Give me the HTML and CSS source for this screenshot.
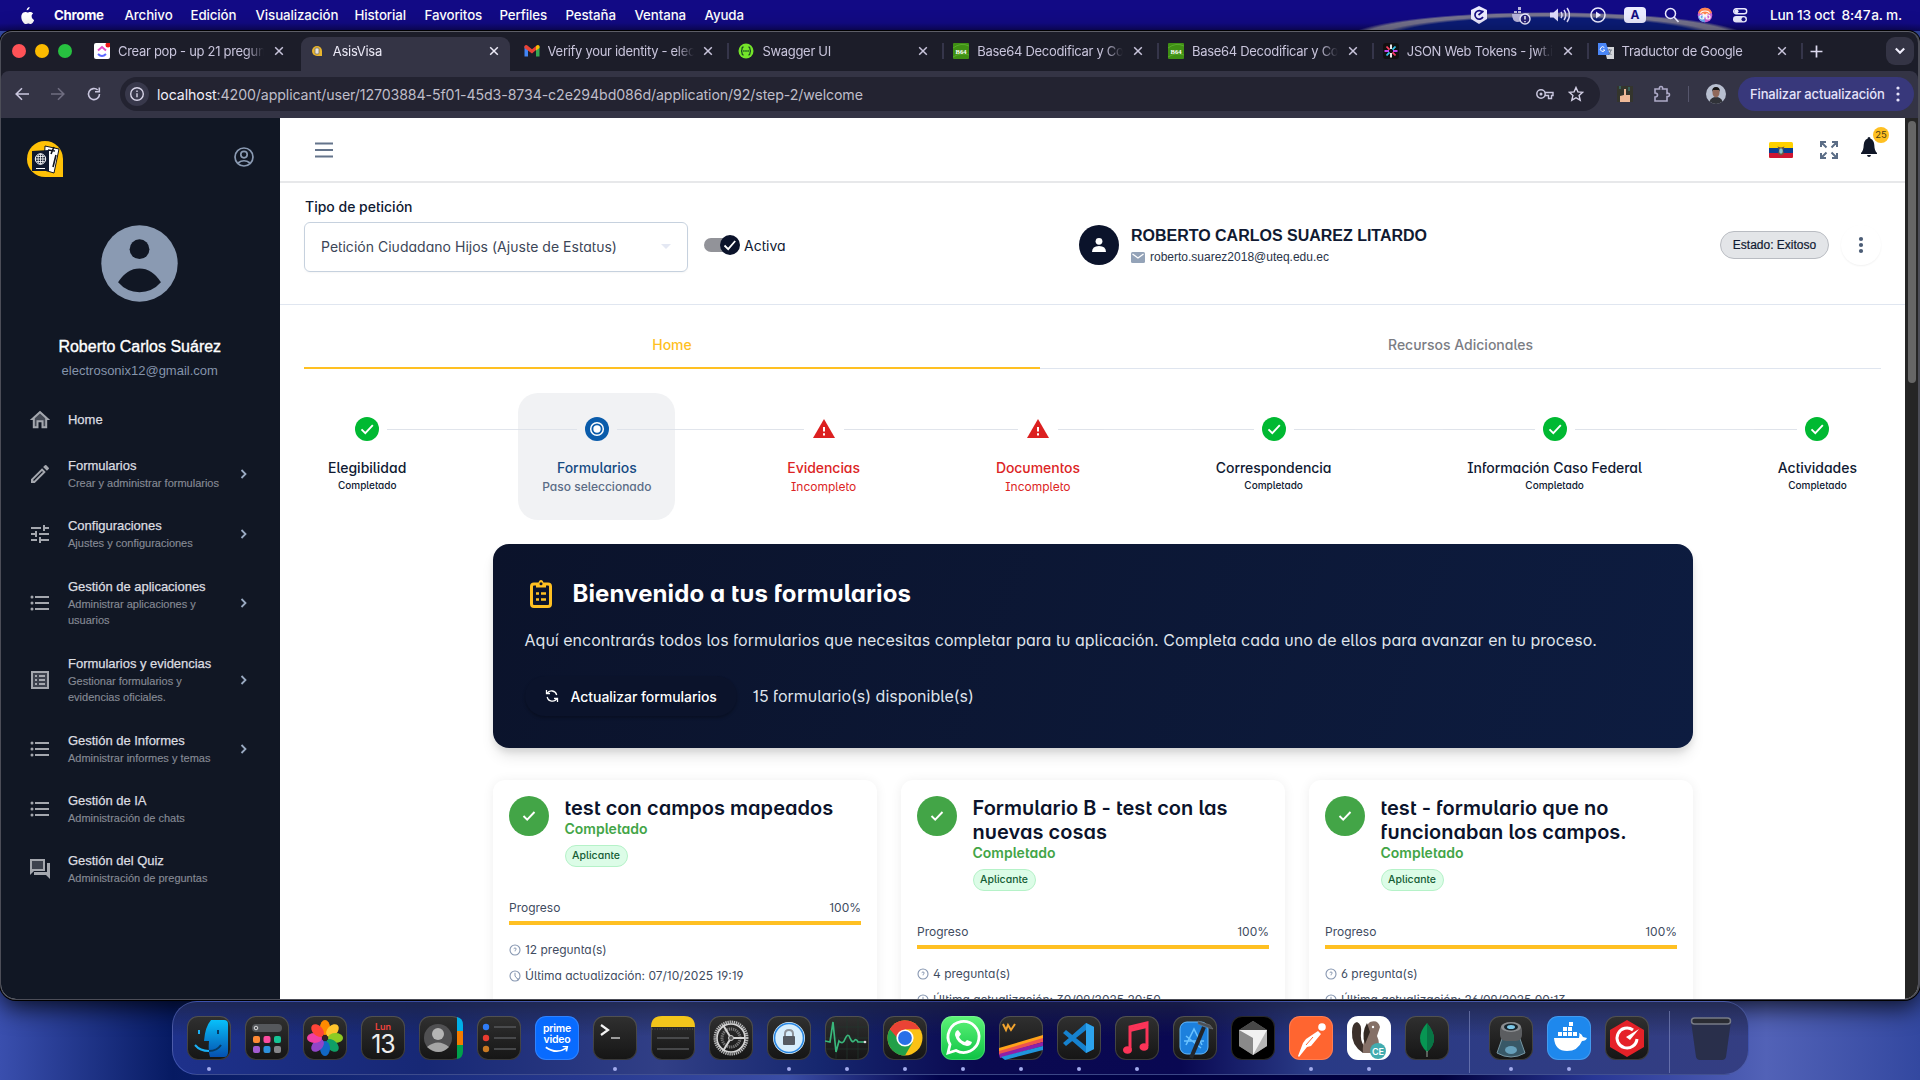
FILE: index.html
```html
<!DOCTYPE html>
<html lang="es">
<head>
<meta charset="utf-8">
<title>AsisVisa</title>
<link rel="stylesheet" href="styles.css">
</head>
<body>
<svg class="sprite" aria-hidden="true">
  <symbol id="close" viewBox="0 0 10 10"><path d="M1.2 1.2l7.6 7.6M8.8 1.2L1.2 8.8" stroke="currentColor" stroke-width="1.5" fill="none"/></symbol>
  <symbol id="list" viewBox="0 0 24 24"><circle cx="4" cy="6" r="1.5"/><circle cx="4" cy="12" r="1.5"/><circle cx="4" cy="18" r="1.5"/><path d="M7 5h14v2H7zM7 11h14v2H7zM7 17h14v2H7z"/></symbol>
  <symbol id="chevron" viewBox="0 0 16 16"><path d="M5.5 4l4 4-4 4" fill="none" stroke="currentColor" stroke-width="1.8"/></symbol>
  <symbol id="done" viewBox="0 0 24 24"><circle cx="12" cy="12" r="12" fill="#00b932"/><path d="M6.5 12.4l3.8 3.8 7.5-8" fill="none" stroke="#fff" stroke-width="1.9"/></symbol>
  <symbol id="warn" viewBox="0 0 24 24"><path d="M12 2L1 21h22z" fill="#dc2020"/><path d="M11 10h2v4.5h-2zM11 16.3h2v2.2h-2z" fill="#fff"/></symbol>
  <symbol id="leaf" viewBox="0 0 16 16"><rect width="16" height="16" rx="1" fill="#3f8f14"/><path d="M0 5q8-6 16-2M0 14q8-5 16-2" stroke="#58ab2c" fill="none"/></symbol>
  <symbol id="help" viewBox="0 0 12 12"><circle cx="6" cy="6" r="5" fill="none" stroke="#8696b0" stroke-width="1.1"/><path d="M4.7 4.7q1.3-1.5 2.4-.2.5 1.1-1.1 2v.8" fill="none" stroke="#8696b0"/></symbol>
  <symbol id="clock" viewBox="0 0 12 12"><circle cx="6" cy="6" r="5" fill="none" stroke="#8696b0" stroke-width="1.1"/><path d="M6 2.8V6l2.8 3.4M9 8v2.5" fill="none" stroke="#8696b0"/></symbol>
</svg>

<div class="desktop">
  <header class="menubar">
    <svg class="apple" viewBox="0 0 14 17"><path d="M9.600 0c.2 1.600-1.400 3.300-2.900 3.200C6.500 1.700 8 .2 9.600 0zM11.600 9c0-1.700 1.400-2.500 1.500-2.600-.9-1.300-2.200-1.500-2.600-1.500-1.200-.1-2.200.7-2.800.7-.6 0-1.500-.7-2.400-.6C4 5 2.700 5.700 2 6.900c-1.500 2.500-.4 6.200 1 8.200.7 1 1.500 2 2.600 2 1 0 1.400-.7 2.600-.7s1.600.7 2.600.6c1.100 0 1.800-1 2.400-1.900.6-.9 1-2 1-2.100-.1 0-2.600-1-2.600-4z" fill="#fff"/></svg>
    <nav class="menus"><b>Chrome</b><span>Archivo</span><span>Edición</span><span>Visualización</span><span>Historial</span><span>Favoritos</span><span>Perfiles</span><span>Pestaña</span><span>Ventana</span><span>Ayuda</span></nav>
    <div class="status">
      <svg viewBox="0 0 20 20"><path d="M10 1l8 4v9l-8 5-8-5V5z" fill="#ecebff"/><path d="M13.500 7A4.300 4.300 0 1 0 14 12M9.500 10l5-4" stroke="#160d83" stroke-width="1.700" fill="none"/></svg>
      <svg viewBox="0 0 20 20"><path d="M1 9h12l5-1q-1 3-3 3-3 6-9 6-5-1-5-8zM3 6h3v2H3zM7 6h3v2H7zM7 2h3v3H7z" fill="#b9b5dc"/><circle cx="14" cy="14" r="5" fill="#272077" stroke="#ecebff" stroke-width="1.400"/><path d="M14 11v3.500M14 16v1.200" stroke="#fff" stroke-width="1.400"/></svg>
      <svg viewBox="0 0 20 20"><path d="M0 7.500h3.500L8 3.500v13l-4.500-4H0z" fill="#dddafa"/><path d="M11 7q2 3 0 6M14 5q3.500 5 0 10M17 3q5 7 0 14" stroke="#dddafa" stroke-width="1.500" fill="none"/></svg>
      <svg viewBox="0 0 20 20"><circle cx="10" cy="10" r="7" fill="none" stroke="#ecebff" stroke-width="1.500"/><path d="M8 6.500l5 3.500-5 3.500z" fill="#ecebff"/></svg>
      <span class="input-source">A</span>
      <svg viewBox="0 0 20 20"><circle cx="8.500" cy="8.500" r="5" fill="none" stroke="#ecebff" stroke-width="1.500"/><path d="M12 12l4.500 5" stroke="#ecebff" stroke-width="1.700"/></svg>
      <svg viewBox="0 0 20 20"><circle cx="10" cy="10" r="7.300" fill="#cf64d8"/><path d="M3 8a7.300 7.300 0 0 1 14 0l-7 2z" fill="#ff8550"/><path d="M3 11q1 6 7 6.300L9 10z" fill="#63aef5"/><path d="M7.500 8.500l5 4M12.500 8.500l-5 4" stroke="#fff" stroke-width="1.300"/><circle cx="7" cy="12" r="2" fill="none" stroke="#fff" stroke-width="1.200"/><circle cx="13" cy="12" r="2" fill="none" stroke="#fff" stroke-width="1.200"/><path d="M5.500 8.500Q6 6 10 6t4.500 2.500" fill="none" stroke="#fff" stroke-width="1.200"/></svg>
      <svg viewBox="0 0 20 20"><rect x="3.700" y="3.700" width="13" height="5" rx="2.500" fill="none" stroke="#ecebff" stroke-width="1.400"/><rect x="3" y="11" width="14" height="6.500" rx="3.200" fill="#ecebff"/><circle cx="6.500" cy="6.200" r="2" fill="#ecebff"/><circle cx="13.500" cy="14.200" r="2" fill="#160d83"/></svg>
    </div>
    <span class="clock-text">Lun 13 oct&nbsp; 8:47&#8202;a. m.</span>
  </header>

  <section class="window">
    <div class="tabstrip">
      <div class="lights"><i class="red"></i><i class="amber"></i><i class="green"></i></div>
      <div class="tab"><svg class="fav" viewBox="0 0 16 16"><rect width="16" height="16" rx="2" fill="#fff"/><path d="M4 7.500L8 4l4 3.500" fill="none" stroke="#e54bc8" stroke-width="2"/><path d="M4 11q4 4 8 0" fill="none" stroke="#5c68ff" stroke-width="2"/><circle cx="14" cy="2" r="2.500" fill="#f21717"/></svg><span>Crear pop - up 21 preguntas</span><svg class="x"><use href="#close"/></svg></div>
      <div class="tab active"><svg class="fav" viewBox="0 0 16 16"><path d="M8 3a5 5 0 1 0 0 10h5V8a5 5 0 0 0-5-5z" fill="#e9b52d"/><rect x="6" y="5" width="4" height="6" rx="1" fill="#e8e4da" stroke="#6a6660" stroke-width=".7"/></svg><span>AsisVisa</span><svg class="x"><use href="#close"/></svg></div>
      <div class="tab"><svg class="fav" viewBox="0 0 16 16"><path d="M.5 3v10.500H4V7z" fill="#4285f4"/><path d="M15.500 3v10.500H12V7z" fill="#34a853"/><path d="M.5 3q1.500-2 3.500 0l4 3.300L12 3v4l-4 3.400L.5 5z" fill="#ea4335"/><path d="M12 3q2-2 3.500 0v2L12 7.500z" fill="#fbbc04"/></svg><span>Verify your identity - electro</span><svg class="x"><use href="#close"/></svg></div>
      <div class="tab"><svg class="fav" viewBox="0 0 16 16"><circle cx="8" cy="8" r="7.500" fill="#75e52a"/><path d="M5.500 4q-1.500 0-1.500 2t-1 2q1 0 1 2t1.500 2M10.500 4q1.500 0 1.500 2t1 2q-1 0-1 2t-1.500 2" fill="none" stroke="#184b22" stroke-width="1.300"/><path d="M5.200 8h5.600" stroke="#184b22" stroke-width="1.500" stroke-dasharray="1.400 .7"/></svg><span>Swagger UI</span><svg class="x"><use href="#close"/></svg></div>
      <div class="tab"><svg class="fav"><use href="#leaf"/><text class="b64" x="8" y="10.500">B64</text></svg><span>Base64 Decodificar y Codific</span><svg class="x"><use href="#close"/></svg></div>
      <div class="tab"><svg class="fav"><use href="#leaf"/><text class="b64" x="8" y="10.500">B64</text></svg><span>Base64 Decodificar y Codific</span><svg class="x"><use href="#close"/></svg></div>
      <div class="tab"><svg class="fav" viewBox="0 0 16 16"><rect width="16" height="16" rx="3" fill="#111"/><g stroke-width="1.800"><path d="M8 1.500V6M8 14.500V10" stroke="#fff"/><path d="M3.500 3.500l3 3.200M12.500 12.500l-3-3.200" stroke="#ff3e63"/><path d="M1.500 8H6M14.500 8H10" stroke="#c346ef"/><path d="M12.500 3.500l-3 3.200M3.500 12.500l3-3.200" stroke="#35c7ea"/></g></svg><span>JSON Web Tokens - jwt.io De</span><svg class="x"><use href="#close"/></svg></div>
      <div class="tab"><svg class="fav" viewBox="0 0 16 16"><path d="M6 4h10v12H9z" fill="#d4d6da"/><path d="M0 0h8l4 12H0z" fill="#4a86f7"/><path d="M6.300 4.500A2.300 2.300 0 1 0 6.800 7H5" fill="none" stroke="#fff"/><path d="M9 7h5M11.500 6v1M13 7q-.5 3-3 5M10.500 9l3 3" stroke="#66707c" fill="none" stroke-width=".8"/></svg><span>Traductor de Google</span><svg class="x"><use href="#close"/></svg></div>
      <svg class="plus" viewBox="0 0 12 12"><path d="M6 .5v11M.5 6h11" stroke="#dcd9ee" stroke-width="1.600"/></svg>
      <div class="tabsearch"><svg viewBox="0 0 10 10"><path d="M1.500 3l3.500 3.500L8.500 3" fill="none" stroke="#efedfb" stroke-width="1.800"/></svg></div>
    </div>

    <div class="toolbar">
      <div class="nav">
        <svg viewBox="0 0 16 16"><path d="M15 8H2.500M8 2.300L2.200 8 8 13.700" fill="none" stroke="#c9c6de" stroke-width="1.600"/></svg>
        <svg viewBox="0 0 16 16"><path d="M1 8h12.500M8 2.300L13.800 8 8 13.700" fill="none" stroke="#6f6d80" stroke-width="1.600"/></svg>
        <svg viewBox="0 0 16 16"><path d="M13.500 8A5.500 5.500 0 1 1 11.700 4M13.300 1.500v4.300H9" fill="none" stroke="#c9c6de" stroke-width="1.600"/></svg>
      </div>
      <div class="omnibox">
        <div class="info"><svg viewBox="0 0 16 16"><circle cx="8" cy="8" r="6.300" fill="none" stroke="#d8d5e8" stroke-width="1.400"/><path d="M8 7.200v4M8 4.400v1.500" stroke="#d8d5e8" stroke-width="1.400"/></svg></div>
        <span class="url"><em>localhost</em>:4200/applicant/user/12703884-5f01-45d3-8734-c2e294bd086d/application/92/step-2/welcome</span>
        <svg class="key" viewBox="0 0 18 12"><circle cx="5" cy="6" r="4.200" fill="none" stroke="#c9c6de" stroke-width="1.500"/><circle cx="5" cy="6" r="1.500" fill="#c9c6de"/><path d="M9 4.500h8v3h-1.500v3h-3v-3H9" fill="none" stroke="#c9c6de" stroke-width="1.400"/></svg>
        <svg class="star" viewBox="0 0 16 16"><path d="M8 1.500l1.900 4.400 4.800.4-3.600 3.200 1.100 4.700L8 11.700l-4.200 2.500 1.100-4.700L1.300 6.300l4.800-.4z" fill="none" stroke="#d3d0e5" stroke-width="1.400"/></svg>
      </div>
      <svg class="ext" viewBox="0 0 16 16"><rect width="16" height="16" fill="#34352d"/><path d="M7 3h2v6h4v7H3v-6l4-1z" fill="#efb998"/><path d="M3 0v3M12 1v4" stroke="#3b8b85"/></svg>
      <svg class="puzzle" viewBox="0 0 18 18"><path d="M2 4h4.500q-.5-2.500 1.500-2.500T9.500 4H14v4.500q2.500-.5 2.500 1.300T14 11.500V16H2v-4q2.500 0 2.500-2T2 8z" fill="none" stroke="#aeaac8" stroke-width="1.600"/></svg>
      <i class="divider"></i>
      <svg class="profile" viewBox="0 0 20 20"><circle cx="10" cy="10" r="10" fill="#b8bfd0"/><path d="M3.500 17.500Q5 13 10 13t6.500 4.500A10 10 0 0 1 3.500 17.500z" fill="#303238"/><ellipse cx="10" cy="8.500" rx="3.500" ry="5" fill="#90685a"/><path d="M6 8q0-5 4-5t4 5l-1-2H7z" fill="#161414"/></svg>
      <div class="update">Finalizar actualización<svg viewBox="0 0 4 16"><circle cx="2" cy="2" r="1.600"/><circle cx="2" cy="8" r="1.600"/><circle cx="2" cy="14" r="1.600"/></svg></div>
    </div>

    <div class="page">
      <aside class="sidebar">
        <div class="brand">
          <svg class="logo" viewBox="0 0 36 36"><path d="M18 0a18 18 0 0 0 0 36h18V18A18 18 0 0 0 18 0z" fill="#ffc107"/><path d="M18 5l14 3-5 24-10-3z" fill="#fff" stroke="#10131d"/><path d="M21 9l7 1M27 6l-3 7M29 14l-3 12" stroke="#10131d" stroke-width="1.600" fill="none"/><path d="M5 10l17-1v21H5z" fill="#10192e"/><circle cx="13.500" cy="18" r="5.200" fill="none" stroke="#fff"/><path d="M8.500 18h10M13.500 13v10M9.500 15.500h8M9.500 20.500h8" stroke="#fff" stroke-width=".8"/><ellipse cx="13.500" cy="18" rx="2.400" ry="5.200" fill="none" stroke="#fff" stroke-width=".8"/><path d="M9 27.500h9" stroke="#fff"/></svg>
          <svg class="me" viewBox="0 0 20 20" fill="none" stroke="#8a9ab2" stroke-width="1.700"><circle cx="10" cy="10" r="9"/><circle cx="10" cy="7.600" r="3.200"/><path d="M4 16q6-4.500 12 0"/></svg>
        </div>
        <div class="who">
          <svg viewBox="0 0 78 78"><circle cx="39" cy="39" r="38.700" fill="#8a9ab2"/><circle cx="39" cy="24.500" r="10" fill="#111724"/><path d="M17.300 58q8.700-14 21.700-14t21.700 14Q52 68 39 68T17.300 58z" fill="#111724"/></svg>
          <strong>Roberto Carlos Suárez</strong>
          <span>electrosonix12@gmail.com</span>
        </div>
        <nav class="side">
          <a class="one"><svg viewBox="0 0 24 24"><path d="M12 3.300L5 9.500V20h4v-6h6v6h4V9.500z" fill-opacity=".35"/><path d="M12 2.700L1.800 12h3v8.300h5.700v-6h3v6h5.700V12h3zm5.200 15.600h-1.700v-6h-7v6H6.800V10.200L12 5.400l5.200 4.800z"/></svg><div><b>Home</b></div></a>
          <a><svg viewBox="0 0 24 24"><path d="M3 17.250V21h3.750L17.810 9.940l-3.750-3.750zM20.710 7.040a1 1 0 0 0 0-1.410l-2.340-2.340a1 1 0 0 0-1.410 0l-1.830 1.830 3.750 3.750z"/><path d="M5.500 18.500L14.500 9.500" stroke="#111724" stroke-width="1.300"/></svg><div><b>Formularios</b><small>Crear y administrar formularios</small></div><svg class="chev"><use href="#chevron"/></svg></a>
          <a><svg viewBox="0 0 24 24"><path d="M3 17v2h6v-2H3zM3 5v2h10V5H3zm10 16v-2h8v-2h-8v-2h-2v6h2zM7 9v2H3v2h4v2h2V9H7zm14 4v-2H11v2h10zm-6-4h2V7h4V5h-4V3h-2v6z"/></svg><div><b>Configuraciones</b><small>Ajustes y configuraciones</small></div><svg class="chev"><use href="#chevron"/></svg></a>
          <a class="three"><svg><use href="#list"/></svg><div><b>Gestión de aplicaciones</b><small>Administrar aplicaciones y<br>usuarios</small></div><svg class="chev"><use href="#chevron"/></svg></a>
          <a class="three"><svg viewBox="0 0 24 24"><path d="M5 5h14v14H5z" fill-opacity=".3"/><path d="M3 3h18v18H3zm2 2v14h14V5zM7 7h2v2H7zm4 0h6v2h-6zM7 11h2v2H7zm4 0h6v2h-6zM7 15h2v2H7zm4 0h6v2h-6z" fill-rule="evenodd"/></svg><div><b>Formularios y evidencias</b><small>Gestionar formularios y<br>evidencias oficiales.</small></div><svg class="chev"><use href="#chevron"/></svg></a>
          <a><svg><use href="#list"/></svg><div><b>Gestión de Informes</b><small>Administrar informes y temas</small></div><svg class="chev"><use href="#chevron"/></svg></a>
          <a><svg><use href="#list"/></svg><div><b>Gestión de IA</b><small>Administración de chats</small></div></a>
          <a><svg viewBox="0 0 24 24"><path d="M4 4h11v8H4z" fill-opacity=".3"/><path d="M2 2h15v12H6l-4 4zm2 2v8h11V4zM19 6h3v16l-4-4H6v-3h13z" fill-rule="evenodd"/></svg><div><b>Gestión del Quiz</b><small>Administración de preguntas</small></div></a>
        </nav>
      </aside>

      <main class="main">
        <div class="topbar">
          <svg class="burger" viewBox="0 0 18 16"><path d="M0 1.500h18M0 8h18M0 14.500h18" stroke="#64748b" stroke-width="2"/></svg>
          <svg class="flag" viewBox="0 0 24 16"><rect width="24" height="16" rx="1.500" fill="#ffd100"/><path d="M0 6h24v5H0z" fill="#0a3f94"/><path d="M0 11h24v3.500q0 1.500-1.500 1.500h-21Q0 16 0 14.500z" fill="#cf1533"/><path d="M8.500 4.500L12 5.500l3.500-1L14 8l1 4-3 1.500L9 12l1-4z" fill="#6e5941"/><ellipse cx="12" cy="9" rx="1.800" ry="2.700" fill="#86c8d3"/></svg>
          <svg class="full" viewBox="0 0 18 18"><path d="M6.500 6.500L1.500 1.500M1 6V1h5M11.500 6.500l5-5M12 1h5v5M6.500 11.500l-5 5M1 12v5h5M11.500 11.500l5 5M17 12v5h-5" fill="none" stroke="#5b6d86" stroke-width="2"/></svg>
          <div class="bell"><svg viewBox="0 0 16 20"><path d="M8 0q1.500 0 1.500 1.800Q13 3 13.300 8c.2 4 .8 6 2.700 8v1H0v-1c1.900-2 2.500-4 2.700-8Q3 3 6.500 1.800 6.500 0 8 0zM6 18h4q-.3 2-2 2t-2-2z" fill="#101727"/></svg><span>25</span></div>
        </div>

        <div class="petition">
          <div class="field"><label>Tipo de petición</label><div class="select"><span>Petición Ciudadano Hijos (Ajuste de Estatus)</span><i></i></div></div>
          <div class="toggle"><div class="track"><svg viewBox="0 0 20 20"><circle cx="10" cy="10" r="10" fill="#0b132b"/><path d="M4.500 10.500l3.700 3.700 7-8.200" fill="none" stroke="#fff" stroke-width="1.800"/></svg></div><span>Activa</span></div>
          <div class="applicant">
            <svg class="face" viewBox="0 0 40 40"><circle cx="20" cy="20" r="20" fill="#0b132b"/><circle cx="20" cy="16.300" r="3.400" fill="#fff"/><path d="M13 27q0-6 7-6t7 6z" fill="#fff"/></svg>
            <div><strong>ROBERTO CARLOS SUAREZ LITARDO</strong><span><svg viewBox="0 0 14 11"><rect width="14" height="11" rx="1.500" fill="#94a3b8"/><path d="M1.500 2L7 6l5.500-4" fill="none" stroke="#fff" stroke-width="1.300"/></svg>roberto.suarez2018@uteq.edu.ec</span></div>
          </div>
          <span class="state">Estado: Exitoso</span>
          <div class="more"><svg viewBox="0 0 6 18"><circle cx="3" cy="3" r="2.100"/><circle cx="3" cy="9" r="2.100"/><circle cx="3" cy="15" r="2.100"/></svg></div>
        </div>

        <div class="apptabs"><span class="on">Home</span><span>Recursos Adicionales</span></div>

        <div class="stepper">
          <div class="step first"><svg><use href="#done"/></svg><b>Elegibilidad</b><small>Completado</small></div><i></i>
          <div class="step sel"><svg viewBox="0 0 24 24"><circle cx="12" cy="12" r="12" fill="#0a5cab"/><circle cx="12" cy="12" r="6.300" fill="none" stroke="#fff" stroke-width="1.500"/><circle cx="12" cy="12" r="3.700" fill="#fff"/></svg><b>Formularios</b><small>Paso seleccionado</small></div><i></i>
          <div class="step err"><svg><use href="#warn"/></svg><b>Evidencias</b><small>Incompleto</small></div><i></i>
          <div class="step err"><svg><use href="#warn"/></svg><b>Documentos</b><small>Incompleto</small></div><i></i>
          <div class="step"><svg><use href="#done"/></svg><b>Correspondencia</b><small>Completado</small></div><i></i>
          <div class="step"><svg><use href="#done"/></svg><b>Información Caso Federal</b><small>Completado</small></div><i></i>
          <div class="step last"><svg><use href="#done"/></svg><b>Actividades</b><small>Completado</small></div>
        </div>

        <div class="content">
          <section class="hero">
            <h1><svg viewBox="0 0 24 30"><rect x="2.500" y="5" width="19" height="22.500" rx="2.500" fill="none" stroke="#ffc022" stroke-width="3"/><path d="M7 8.500V4h2.500q.5-3 2.500-3t2.500 3H17v4.500z" fill="#ffc022"/><circle cx="12" cy="4.800" r="1.500" fill="#0b142d"/><path d="M7 14.500h3M12 14.500h5M7 20.500h3M12 20.500h5" stroke="#ffc022" stroke-width="2.600"/></svg>Bienvenido a tus formularios</h1>
            <p>Aquí encontrarás todos los formularios que necesitas completar para tu aplicación. Completa cada uno de ellos para avanzar en tu proceso.</p>
            <div class="actions"><button><svg viewBox="0 0 14 14"><path d="M1.500 1v3.500H5M2 4.500a5.300 5.300 0 0 1 9.700 1.500M12.500 13V9.500H9M12 9.500A5.300 5.300 0 0 1 2.200 8" fill="none" stroke="#fff" stroke-width="1.300"/></svg>Actualizar formularios</button><span>15 formulario(s) disponible(s)</span></div>
          </section>
          <div class="cards">
            <article><div class="head"><svg viewBox="0 0 40 40"><circle cx="20" cy="20" r="20" fill="#43a547"/><path d="M14.500 20l3.700 3.700 7.300-7.700" fill="none" stroke="#fff" stroke-width="1.900"/></svg><div><h2>test con campos mapeados</h2><b>Completado</b><span class="chip">Aplicante</span></div></div><div class="prog"><span>Progreso</span><span>100%</span></div><div class="bar"></div><p><svg><use href="#help"/></svg>12 pregunta(s)</p><p><svg><use href="#clock"/></svg>Última actualización: 07/10/2025 19:19</p></article>
            <article><div class="head"><svg viewBox="0 0 40 40"><circle cx="20" cy="20" r="20" fill="#43a547"/><path d="M14.500 20l3.700 3.700 7.300-7.700" fill="none" stroke="#fff" stroke-width="1.900"/></svg><div><h2>Formulario B - test con las<br>nuevas cosas</h2><b>Completado</b><span class="chip">Aplicante</span></div></div><div class="prog"><span>Progreso</span><span>100%</span></div><div class="bar"></div><p><svg><use href="#help"/></svg>4 pregunta(s)</p><p><svg><use href="#clock"/></svg>Última actualización: 30/09/2025 20:50</p></article>
            <article><div class="head"><svg viewBox="0 0 40 40"><circle cx="20" cy="20" r="20" fill="#43a547"/><path d="M14.500 20l3.700 3.700 7.300-7.700" fill="none" stroke="#fff" stroke-width="1.900"/></svg><div><h2>test - formulario que no<br>funcionaban los campos.</h2><b>Completado</b><span class="chip">Aplicante</span></div></div><div class="prog"><span>Progreso</span><span>100%</span></div><div class="bar"></div><p><svg><use href="#help"/></svg>6 pregunta(s)</p><p><svg><use href="#clock"/></svg>Última actualización: 26/09/2025 00:13</p></article>
          </div>
        </div>
      </main>
      <div class="scroll"><i></i></div>
    </div>
  </section>

  <footer class="dockrow">
    <div class="dock">
      <div class="app run"><svg viewBox="0 0 44 44"><defs><linearGradient id="fb" x2="0" y2="1"><stop stop-color="#08c0fa"/><stop offset="1" stop-color="#0550b0"/></linearGradient></defs><path d="M24 4h13q4 0 4 4v28q0 5-4 5H23q-2-6-1-16h-5Q18 11 24 4z" fill="url(#fb)"/><path d="M12 14v4" stroke="#1ab0f5" stroke-width="2"/><path d="M31 14v4" stroke="#073a63" stroke-width="2"/><path d="M8 29q5 6 14 6" stroke="#1ab0f5" stroke-width="2" fill="none"/><path d="M22 35q8 0 12-6" stroke="#073a63" stroke-width="2" fill="none"/></svg></div>
      <div class="app"><svg viewBox="0 0 44 44"><rect x="7" y="8" width="30" height="8" rx="4" fill="#55585c"/><circle cx="11" cy="12" r="1.800" fill="none" stroke="#ddd"/><rect x="8" y="20" width="7" height="7" rx="2" fill="#ff8a35"/><rect x="18.500" y="20" width="7" height="7" rx="2" fill="#fb4ba0"/><rect x="29" y="20" width="7" height="7" rx="2" fill="#15c495"/><rect x="8" y="30" width="7" height="7" rx="2" fill="#a35bd2"/><rect x="18.500" y="30" width="7" height="7" rx="2" fill="#2d91dc"/><rect x="29" y="30" width="7" height="7" rx="2" fill="#85868a"/></svg></div>
      <div class="app"><svg viewBox="-22 -22 44 44"><g><ellipse cy="-10.500" rx="5" ry="7.500" fill="#ff8a00"/><ellipse cy="-10.500" rx="5" ry="7.500" fill="#ffc42d" transform="rotate(45)"/><ellipse cy="-10.500" rx="5" ry="7.500" fill="#8ecb24" transform="rotate(90)"/><ellipse cy="-10.500" rx="5" ry="7.500" fill="#0f9f65" transform="rotate(135)"/><ellipse cy="-10.500" rx="5" ry="7.500" fill="#1168c5" transform="rotate(180)"/><ellipse cy="-10.500" rx="5" ry="7.500" fill="#9145c8" transform="rotate(225)"/><ellipse cy="-10.500" rx="5" ry="7.500" fill="#f03fa5" transform="rotate(270)"/><ellipse cy="-10.500" rx="5" ry="7.500" fill="#ff4538" transform="rotate(315)"/></g><circle r="2.500" fill="#381f29"/></svg></div>
      <div class="app cal"><b>Lun</b><span>13</span></div>
      <div class="app"><svg viewBox="0 0 44 44"><path d="M38 1q6 1 6 8v6h-6z" fill="#00afe8"/><path d="M38 15h6v14h-6z" fill="#f47b00"/><path d="M38 29h6v6q0 7-6 8z" fill="#00a14b"/><circle cx="19" cy="22" r="14" fill="#505052"/><circle cx="19" cy="18" r="6" fill="#b5b5b5"/><path d="M8 31q11-9 22 0-10 10-22 0z" fill="#a5a5a5"/></svg></div>
      <div class="app"><svg viewBox="0 0 44 44"><circle cx="9" cy="11" r="3.200" fill="#2f7cf6"/><circle cx="9" cy="22" r="3.200" fill="#e83b30"/><circle cx="9" cy="33" r="3.200" fill="#c97923"/><path d="M17 11h22M17 22h22M17 33h22" stroke="#55575a" stroke-width="1.700"/></svg></div>
      <div class="app prime"><span>prime</span><span>video</span><svg viewBox="0 0 30 8"><path d="M3 1q11 8 22 1M21 0l5 .5-1 5" fill="none" stroke="#fff" stroke-width="1.800"/></svg></div>
      <div class="app run"><svg viewBox="0 0 44 44"><path d="M8 9l7 5-7 5" fill="none" stroke="#f3f3f3" stroke-width="2.200"/><path d="M18 22h9" stroke="#aaa" stroke-width="1.800"/></svg></div>
      <div class="app"><svg viewBox="0 0 44 44"><path d="M0 11Q0 0 11 0h22q11 0 11 11z" fill="#f3c51b"/><path d="M1 13h42" stroke="#555" stroke-dasharray="1 1.500"/><path d="M6 22h32M6 33h32" stroke="#55575a" stroke-width="1.700"/></svg></div>
      <div class="app"><svg viewBox="0 0 44 44" fill="none"><circle cx="22" cy="22" r="16" stroke="#b9babb" stroke-width="3" stroke-dasharray="1.300 .8"/><circle cx="22" cy="22" r="14" stroke="#d5d5d5" stroke-width="1.600"/><circle cx="22" cy="22" r="9" stroke="#777" stroke-width="3" stroke-dasharray="1.300 .8"/><path d="M22 22h14M22 22L14 9M22 22l-8 13" stroke="#d5d5d5" stroke-width="2"/><circle cx="22" cy="22" r="2.500" fill="#555" stroke="#ccc"/></svg></div>
      <div class="app run"><svg viewBox="0 0 44 44"><circle cx="22" cy="22" r="16" fill="#d7eefc"/><circle cx="22" cy="22" r="14.500" fill="none" stroke="#2a87e3" stroke-width="1.600"/><path d="M18 21v-3q0-4 4-4t4 4v3" fill="none" stroke="#8c9299" stroke-width="2"/><rect x="16" y="20" width="12" height="9" rx="1" fill="#555b62"/></svg></div>
      <div class="app run"><svg viewBox="0 0 44 44"><path d="M11 1v42M22 1v42M33 1v42M1 11h42M1 22h42M1 33h42" stroke="#24382f" stroke-width=".7"/><path d="M0 25l5 1L8 6l3 30 3-11q4 4 6-2 3-7 5-1 2 5 4 3 2-3 4 1h6" fill="none" stroke="#39b77b" stroke-width="1.700"/><circle cx="40" cy="26" r="1.300" fill="#ddd"/></svg></div>
      <div class="app run"><svg viewBox="0 0 44 44"><circle cx="22" cy="22" r="17.500" fill="#fbc116"/><path d="M6.800 13.300A17.500 17.500 0 0 1 37.200 13.300H22z" fill="#ea4335"/><path d="M6.800 13.300A17.500 17.500 0 0 0 22 39.500l7.600-13L22 22z" fill="#22a049"/><path d="M6.800 13.300Q12 5 22 4.500V22h-7.600z" fill="#ea4335"/><circle cx="22" cy="22" r="8.600" fill="#fff"/><circle cx="22" cy="22" r="6.900" fill="#286fe8"/></svg></div>
      <div class="app run wa"><svg viewBox="0 0 44 44"><path d="M7 37l2-8.500a15.500 15.500 0 1 1 6 6z" fill="none" stroke="#fff" stroke-width="2.800"/><path d="M17 14l3 4-2 3q2 4 6 5l2-2 5 2q-1 4-5 4-10-2-12-11 0-4 3-5z" fill="#fff"/></svg></div>
      <div class="app run"><svg viewBox="0 0 44 44"><path d="M4 8l3 6 2-5 3 5 4-6" fill="none" stroke="#f3a42e" stroke-width="2"/><path d="M0 32l44-13v4L0 36z" fill="#ffa31a"/><path d="M0 35l44-13v4L0 39z" fill="#ed5350"/><path d="M0 38l44-12v4L1 42z" fill="#8f1fa9"/><path d="M2 41l42-11v4L6 44z" fill="#2095dc"/></svg></div>
      <div class="app run"><svg viewBox="0 0 44 44"><path d="M29 7l8 4v22l-8 4L6 17l3-3 20 16V14L9 30l-3-3z" fill="#1682cf"/><path d="M29 7l8 4v22l-8 4z" fill="#2ca3ed"/></svg></div>
      <div class="app run"><svg viewBox="0 0 44 44"><path d="M15 33V11l17-4v23" fill="none" stroke="#fb3458" stroke-width="3"/><path d="M15 12l17-4v4l-17 4z" fill="#fb3458"/><ellipse cx="12.500" cy="34" rx="4.500" ry="3.800" fill="#fb3458"/><ellipse cx="29" cy="31" rx="4.500" ry="3.800" fill="#fb3458"/></svg></div>
      <div class="app"><svg viewBox="0 0 44 44"><rect x="7" y="6" width="28" height="32" rx="7" fill="#1c80dd" stroke="#65baff"/><path d="M13 29l8-16 8 16M11 25h20M13 20l15 12" fill="none" stroke="#69c2ff" stroke-width="1.600"/><path d="M18 42L31 11" stroke="#23262b" stroke-width="4"/><path d="M25 5l12 4 3 4-4-1-11-4z" fill="#4c5158" stroke="#777" stroke-width=".6"/></svg></div>
      <div class="app black"><svg viewBox="0 0 44 44"><path d="M22 5l14 9v16l-14 9-14-9V14z" fill="#777"/><path d="M22 5l14 9H8z" fill="#484848"/><path d="M8 14l14 8v17L8 30z" fill="#8a8a8a"/><path d="M36 14L22 22v17l14-9z" fill="#b5b5b5"/><path d="M8 14h28L22 39V22z" fill="#f1f1f1"/></svg></div>
      <div class="app run postman"><svg viewBox="0 0 44 44"><circle cx="33" cy="11" r="3.800" fill="#fff"/><path d="M29 15l3 3-10 12-4 1-8 10-1-1 5-13 3-4z" fill="#fff"/><path d="M17 29l7-8" stroke="#ff6530"/></svg></div>
      <div class="app run white"><svg viewBox="0 0 44 44"><path d="M16 37Q4 29 5 16 5 7 10 6q5 2 4 11-1 7 3 13z" fill="#3c302b"/><path d="M23 6q8-3 10 5l-3 9q4 8 0 17H16q-1-9 3-16-3-10 4-15z" fill="#857067"/><path d="M20 7q-6 10-2 21l5-12z" fill="#332923"/><circle cx="26" cy="11" r="1.200" fill="#fff"/><circle cx="31" cy="35" r="8" fill="#42acb0"/><text x="31" y="38.500" font-family="Inter" font-weight="600" font-size="9" text-anchor="middle" fill="#fff">CE</text></svg></div>
      <div class="app"><svg viewBox="0 0 44 44"><path d="M22 7q14 17 0 29Q8 23 22 7z" fill="#079653"/><path d="M22 7q14 17 0 29z" fill="#087545"/><path d="M22 35v6" stroke="#9aa89c"/></svg></div>
      <i class="dsep"></i>
      <div class="app run"><svg viewBox="0 0 44 44"><path d="M14 20h16l6 17q-14 8-28 0z" fill="#385867" stroke="#7796a3"/><rect x="11" y="8" width="22" height="17" rx="6" fill="#5b5d60"/><ellipse cx="22" cy="11" rx="10" ry="5" fill="#8b8d90"/><ellipse cx="22" cy="11" rx="7" ry="3.400" fill="#17242b"/><ellipse cx="22" cy="11" rx="4" ry="2" fill="#7dc8e8"/><ellipse cx="22" cy="34" rx="6" ry="4" fill="#66a0bb"/></svg></div>
      <div class="app run docker"><svg viewBox="0 0 44 44"><path d="M7 22h25q1-3 0-5 3 1 4 4l4 1q-1 3-5 3-4 10-15 10Q8 35 7 22z" fill="#fff"/><path d="M11 16h4v4h-4zM16 16h4v4h-4zM21 16h4v4h-4zM26 16h4v4h-4zM16 11h4v4h-4zM21 11h4v4h-4zM22 6h4v4h-4z" fill="#fff"/></svg></div>
      <div class="app"><svg viewBox="0 0 44 44"><path d="M22 4l17 10v17L22 41 5 31V14z" fill="#e52128"/><path d="M28 14a10 10 0 1 0 4 9" fill="none" stroke="#fff" stroke-width="3"/><path d="M21 21l13-8-9 11z" fill="#fff"/></svg></div>
      <i class="dsep"></i>
      <div class="app trash"><svg viewBox="0 0 44 44"><path d="M2 5l5 36q1 3 4 3h22q3 0 4-3l5-36z" fill="#292f4b"/><rect x="2.500" y="2" width="39" height="6" rx="3" fill="#2a2c33" stroke="#777b86" stroke-width="1.500"/></svg></div>
    </div>
  </footer>
</div>
</body>
</html>
```
FILE: styles.css
```css
* { box-sizing: border-box; }
body { margin: 0; overflow: hidden; font-family: Inter, sans-serif; }
svg { display: block; flex: none; }
.sprite { position: absolute; width: 0; height: 0; }
.desktop { width: 1920px; height: 1080px; display: grid; grid-template-rows: 31px 969px 80px; background: linear-gradient(90deg, #3a4fae 0, #061a62 9%, #26388e 30%, #3a4da5 41%, #01034b 49%, #01013c 75%, #283795 83%, #5262b7 92%, #3348a0 100%); }

/* System menu bar */
.menubar { display: flex; align-items: center; padding: 0 18px 1px 20px; color: #fff; font-size: 13.3px; font-weight: 500; background: radial-gradient(ellipse 200px 26px at 1548px 38px, #0b1c78 0 78%, #77748f 86% 94%, transparent 100%), linear-gradient(#120a85 75%, #0c065b); }
.apple { width: 14px; height: 17px; margin-right: 20px; }
.menus { display: grid; grid-template-columns: 70.5px 66px 65px 99px 70px 75px 66px 69px 70px 50px; }
.menus b { font-weight: 700; letter-spacing: -.3px; }
.menus span { letter-spacing: -.1px; }
.status { display: grid; grid-template-columns: 42px 41px 38px 37px 38px 36px 30px 40px; align-items: center; justify-items: center; margin-left: auto; margin-right: 10px; }
.status svg { width: 20px; height: 20px; }
.input-source { width: 22px; height: 16px; line-height: 16px; border-radius: 4px; background: #ecebff; color: #160d83; font-size: 12px; font-weight: 700; text-align: center; }
.clock-text { width: 132px; font-size: 13.7px; white-space: nowrap; letter-spacing: -.2px; }

/* Browser window */
.window { display: flex; flex-direction: column; overflow: hidden; border: 1px solid #4c4d57; border-top-color: #5d5e67; border-right-width: 2px; border-radius: 12px 12px 16px 16px; background: #1c1d29; box-shadow: 0 0 0 1px #000, 0 8px 24px rgba(0,0,0,.75); }
.tabstrip { height: 39px; display: flex; align-items: center; flex: none; color: #c9c5dc; font-size: 13px; }
.lights { width: 85px; padding: 0 0 1px 11px; display: flex; gap: 9px; flex: none; }
.lights i { width: 14px; height: 14px; border-radius: 50%; }
.red { background: #ff5257; } .amber { background: #fcbb00; } .green { background: #27c140; }
.tab { width: 214.8px; height: 34px; align-self: flex-end; flex: none; display: flex; align-items: center; padding: 0 17px 7px 8px; position: relative; }
.fav { width: 16px; height: 16px; margin-right: 8px; }
.b64 { font: 700 6.6px "Liberation Serif", serif; fill: #fff; text-anchor: middle; }
.tab span { width: 146px; white-space: nowrap; overflow: hidden; letter-spacing: -.3px; mask-image: linear-gradient(90deg, #000 88%, transparent); }
.x { width: 10px; height: 10px; margin-left: auto; }
.tab::after { content: ""; position: absolute; right: 1px; top: 6px; width: 2px; height: 16px; background: #35354a; }
.tab:nth-of-type(2)::after, .tab.active::after { display: none; }
.active { color: #eceaf7; background: #343445; border-radius: 9px 9px 0 0; width: 208.8px; margin-right: 6px; padding-right: 11px; }
.plus { width: 13px; height: 13px; margin: -1px 0 0 6px; }
.tabsearch { width: 28px; height: 28px; border-radius: 9px; background: #343445; display: grid; place-items: center; margin: -1px 4px 0 auto; }
.tabsearch svg { width: 12px; height: 12px; }
.toolbar { height: 47px; flex: none; display: flex; align-items: center; padding: 0 4px 1px 13px; background: #343445; border-radius: 8px 8px 0 0; }
.nav { display: flex; gap: 20px; width: 106px; flex: none; }
.nav svg { width: 16px; height: 16px; }
.omnibox { width: 1480px; height: 34px; border-radius: 17px; background: #232331; display: flex; align-items: center; padding: 0 16px 0 5px; }
.info { width: 24px; height: 24px; border-radius: 50%; background: #38384b; display: grid; place-items: center; margin-right: 8px; }
.info svg { width: 16px; height: 16px; }
.url { font-size: 14.2px; letter-spacing: -.115px; color: #bfbdc9; white-space: nowrap; }
.url em { font-style: normal; color: #f0eef8; }
.key { width: 18px; height: 12px; margin-left: auto; margin-right: 14px; }
.star { width: 16px; height: 16px; }
.ext { width: 16px; height: 18px; margin-left: 17px; }
.puzzle { width: 18px; height: 18px; margin-left: 20px; }
.divider { width: 1px; height: 16px; background: #56566c; margin: 0 17px; }
.profile { width: 20px; height: 20px; }
.update { margin-left: auto; width: 176px; height: 34px; border-radius: 17px; background: #38387b; color: #e5e2fa; font-size: 13px; font-weight: 500; letter-spacing: -.15px; display: flex; align-items: center; justify-content: space-between; padding: 0 14px 0 12px; white-space: nowrap; }
.update svg { width: 4px; height: 16px; fill: #e5e2fa; }
.page { display: flex; flex: 1; min-height: 0; overflow: hidden; background: #fff; }

/* Sidebar */
.sidebar { width: 279px; flex: none; background: #111724; color: #fff; font-family: "Liberation Sans", Arial, sans-serif; }
.brand { display: flex; justify-content: space-between; align-items: center; padding: 23px 26px 0 26px; }
.logo { width: 36px; height: 36px; }
.me { width: 20px; height: 20px; margin-top: -4px; }
.who { display: flex; flex-direction: column; align-items: center; padding: 48px 1.5px 0 0; }
.who svg { width: 77px; height: 77px; }
.who strong { font-weight: 400; font-size: 16px; line-height: 24px; margin-top: 33px; -webkit-text-stroke: .35px #fff; }
.who span { font-size: 13px; line-height: 24px; color: #8594ab; }
.side { padding-top: 13px; }
.side a { height: 60.2px; display: flex; align-items: center; padding: 0 28px 0 27px; }
.side a.one { height: 48px; }
.side a.three { height: 77.3px; }
.side a > svg { width: 24px; height: 24px; fill: #a4a7ae; margin-right: 16px; }
.side a > .chev { width: 16px; height: 16px; margin: 0 0 0 auto; color: #9aaac2; }
.side b, .side small { display: block; font-weight: 400; white-space: nowrap; }
.side b { font-size: 13px; line-height: 18px; color: #dcdde0; letter-spacing: -.02px; -webkit-text-stroke: .25px #dcdde0; }
.side small { font-size: 11px; line-height: 16px; color: #868a94; -webkit-text-stroke: .15px #868a94; }

/* Main column */
.main { width: 1625px; flex: none; color: #101a32; font-feature-settings: "salt", "cv11", "cv09", "cv05"; overflow: hidden; }
.topbar { height: 65px; border-bottom: 2px solid #e7e8ea; display: flex; align-items: center; padding: 0 28px 0 35px; }
.burger { width: 18px; height: 16px; }
.flag { width: 24px; height: 16px; margin-left: auto; }
.full { width: 18px; height: 18px; margin: 0 23px 0 27px; }
.bell { position: relative; width: 16px; height: 20px; margin-top: -5px; }
.bell svg { width: 16px; height: 20px; }
.bell span { position: absolute; left: 12px; top: -10px; width: 16px; height: 16px; border-radius: 50%; background: #ffc022; font-size: 9.5px; line-height: 16px; text-align: center; color: #4c3d16; }
.petition { height: 122px; border-bottom: 1px solid #e0e6f0; display: flex; padding: 14px 24px 0; }
.field label { display: block; font-size: 14px; font-weight: 500; line-height: 20px; padding-left: 1px; }
.select { width: 384px; height: 50px; margin-top: 5px; border: 1px solid #c6d1de; border-radius: 6px; display: flex; align-items: center; justify-content: space-between; padding: 0 16px 1px; font-size: 14px; letter-spacing: .02px; color: #3c4657; box-shadow: 0 1px 2px rgba(0,0,0,.04); }
.select i { border: 5px solid transparent; border-top-color: #e4e8f3; border-bottom: 0; }
.toggle { display: flex; align-items: center; height: 20px; margin: 38px 0 0 16px; font-size: 14px; width: 375px; }
.track { width: 28px; height: 14px; border-radius: 7px; background: #929399; margin-right: 12px; display: flex; align-items: center; padding-left: 16px; }
.track svg { width: 20px; height: 20px; }
.applicant { display: flex; gap: 12px; margin-top: 28px; height: 40px; font-family: "Liberation Sans", Arial, sans-serif; font-feature-settings: normal; }
.face { width: 40px; height: 40px; }
.applicant strong { display: block; font-size: 16px; line-height: 21px; white-space: nowrap; letter-spacing: -.01px; }
.applicant span { display: flex; align-items: center; gap: 5px; font-size: 12px; line-height: 22px; color: #283348; }
.applicant span svg { width: 14px; height: 11px; }
.state { margin: 34px 0 0 auto; height: 28px; width: 109px; text-align: center; border: 1px solid #b9bcc2; border-radius: 14px; background: #e3e5e8; font: 12px/26px "Liberation Sans", Arial, sans-serif; -webkit-text-stroke: .2px #101a32; }
.more { width: 40px; height: 40px; margin: 28px 0 0 12px; border-radius: 50%; display: grid; place-items: center; box-shadow: 0 1px 2px rgba(0,0,0,.06); }
.more svg { width: 6px; height: 18px; fill: #4b5c75; }
.apptabs { height: 48px; margin: 16px 24px 0; display: grid; grid-template-columns: 736px 1fr; border-bottom: 1px solid #dfe5ef; text-align: center; font-size: 14px; line-height: 48px; font-weight: 500; color: #7b7d84; }
.apptabs span { height: 48px; }
.apptabs .on { color: #ffc022; border-bottom: 2px solid #ffc022; }
.stepper { margin: 24px 0 0 24px; width: 1577px; display: flex; }
.stepper > i { flex: 1; height: 1px; margin-top: 36px; background: #e1e5ec; }
.step { height: 127px; padding: 24px 24px 0; display: flex; flex-direction: column; align-items: center; position: relative; white-space: nowrap; }
.step > svg { width: 24px; height: 24px; }
.step::before, .step::after { content: ""; position: absolute; top: 36px; height: 1px; background: #dfe3ea; width: calc(50% - 20px); }
.step::before { left: 0; } .step::after { right: 0; }
.first::before, .last::after { display: none; }
.step b { font-size: 14px; font-weight: 500; line-height: 20px; margin-top: 17px; letter-spacing: -.05px; }
.first b, .last b { letter-spacing: 0; }
.step small { font-size: 10px; line-height: 14px; font-weight: 500; }
.sel { background: #f1f2f4; border-radius: 20px; }
.sel b { color: #164b83; }
.sel small, .err small { font-size: 12px; line-height: 18px; font-weight: 400; }
.sel small { color: #5b6c86; font-weight: 500; }
.err { color: #dc2525; }
.content { width: 1200px; margin: 24px 0 0 213px; }
.hero { height: 204px; border-radius: 16px; padding: 32px 31.500px; background: linear-gradient(110deg, #0b132b, #0d1c40); color: #dfe3eb; box-shadow: 0 10px 15px -3px rgba(0,0,0,.12), 0 4px 6px rgba(0,0,0,.08); font-size: 16px; }
.hero h1 { height: 36px; margin: 0; display: flex; align-items: center; gap: 20px; color: #fff; font-size: 24px; letter-spacing: .1px; line-height: 36px; font-weight: 700; padding-left: 4px; }
.hero h1 svg { width: 24px; height: 30px; }
.hero p { margin: 16px 0 0; line-height: 24px; white-space: nowrap; letter-spacing: .02px; }
.actions { display: flex; align-items: center; gap: 16px; margin-top: 24px; }
.actions button { width: 212px; height: 40px; border: 0; border-radius: 20px; background: #0b132b; box-shadow: 0 2px 3px rgba(0,0,0,.25); color: #fff; font: 500 14px Inter, sans-serif; letter-spacing: -.05px; white-space: nowrap; display: flex; align-items: center; gap: 12px; padding: 0 20px; }
.actions button svg { width: 14px; height: 14px; }
.cards { display: grid; grid-template-columns: repeat(3, 1fr); gap: 24px; margin-top: 32px; }
.cards article { height: 300px; border-radius: 12px; padding: 16px; box-shadow: 0 1px 12px rgba(0,0,0,.07); font-size: 12px; color: #414c5f; }
.head { display: flex; gap: 15.500px; margin-bottom: 32px; }
.head > svg { width: 40px; height: 40px; }
.head h2 { margin: 0; font-size: 20px; letter-spacing: .04px; line-height: 24px; font-weight: 600; color: #0b132b; white-space: nowrap; }
.head b { display: block; color: #43a547; font-size: 14px; line-height: 18px; font-weight: 600; }
.chip { display: block; width: 63px; height: 22px; margin-top: 7px; border: 1px solid #b5f2c8; border-radius: 11px; background: #dcfce7; color: #165c35; font-size: 10.500px; font-weight: 500; line-height: 20px; text-align: center; }
.prog { display: flex; justify-content: space-between; line-height: 18px; }
.bar { height: 4px; background: #ffc022; margin: 4px 0 16px; }
.cards p { display: flex; align-items: center; gap: 4px; margin: 0 0 8px; line-height: 18px; white-space: nowrap; }
.cards p svg { width: 12px; height: 12px; }
.scroll { flex: 1; background: #252525; padding: 3px 2px; }
.scroll i { display: block; width: 8px; height: 262px; margin: 0 auto; border-radius: 4px; background: #666; }

/* Dock */
.dockrow { padding: 1px 0 0 172px; }
.dock { width: 1577px; height: 74px; border: 1px solid rgba(110,130,225,.42); border-radius: 25px; padding: 14px 13px 0 14px; display: flex; gap: 14px; background: linear-gradient(rgba(29,35,65,.7), rgba(29,35,65,0) 48%), linear-gradient(90deg, #1e318b 0, #172875 16%, #313f86 31%, #16276f 41%, #0a0950 51%, #090852 64%, #293a86 72%, #343e82 100%); }
.app { width: 44px; height: 44px; flex: none; border-radius: 11px; background: linear-gradient(#303030, #151515); box-shadow: inset 0 0 0 1px rgba(255,255,255,.16); position: relative; }
.app > svg { width: 44px; height: 44px; }
.run::after { content: ""; position: absolute; left: 20px; top: 51px; width: 4px; height: 4px; border-radius: 50%; background: #a2abed; }
.cal { display: flex; flex-direction: column; align-items: center; padding-top: 5px; color: #eee; }
.cal b { color: #f0433d; font-size: 9px; line-height: 11px; font-weight: 600; }
.cal span { font-size: 25px; line-height: 24px; letter-spacing: -1px; }
.prime { background: #086bff; display: flex; flex-direction: column; align-items: center; padding-top: 8px; color: #fff; font-size: 10.5px; font-weight: 600; line-height: 10.5px; letter-spacing: -.2px; }
.app.prime > svg { width: 28px; height: 8px; margin-top: 1px; }
.wa { background: linear-gradient(#5df478, #0dc244); }
.black { background: #000; }
.postman { background: #ff6530; }
.white { background: #fff; }
.docker { background: #1e88ed; }
.trash { background: none; box-shadow: none; }
.dsep { width: 1px; height: 62px; margin: -5px 5.5px 0; background: rgba(150,160,210,.5); flex: none; }
```
